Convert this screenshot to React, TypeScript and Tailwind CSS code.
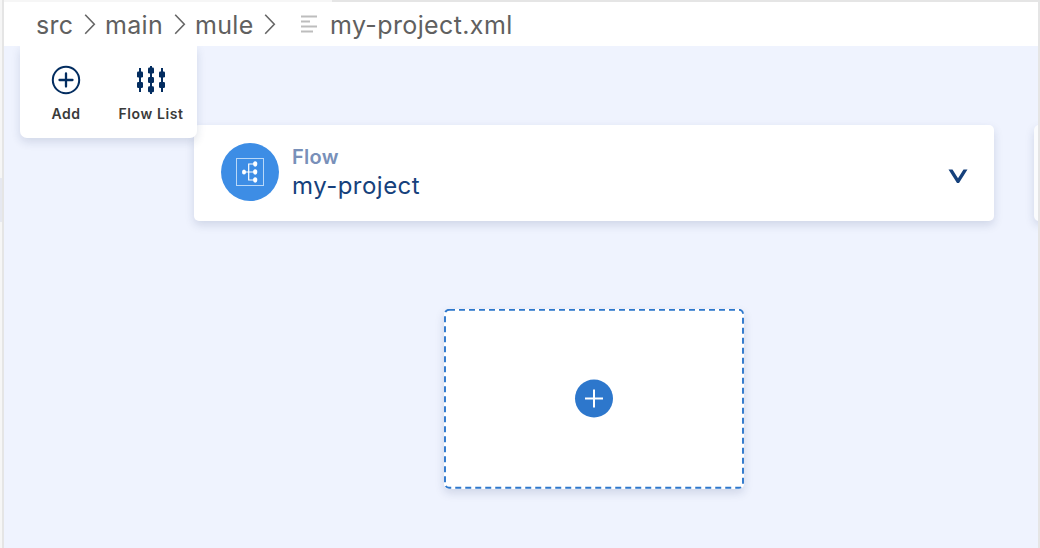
import React from "react";

const Chevron = () => (
  <svg className="h-[22px] w-[12px] shrink-0" viewBox="0 0 12 22" fill="none" stroke="#666" strokeWidth="1.6">
    <path d="M1.2 1.7 L10.3 11.2 L1.2 20.7" />
  </svg>
);

const Crumb = ({ className, children }: { className: string; children: React.ReactNode }) => (
  <span className={`shrink-0 whitespace-nowrap pt-[2px] leading-[44px] ${className}`}>{children}</span>
);

function Breadcrumbs() {
  return (
    <header className="flex h-[44px] shrink-0 items-center bg-white pl-[32px] text-[25px] text-[#606060]">
      <Crumb className="w-[48px] tracking-[0.3px]">src</Crumb>
      <Chevron />
      <Crumb className="ml-[9px] w-[69px] tracking-[0.3px]">main</Crumb>
      <Chevron />
      <Crumb className="ml-[9px] w-[69px] tracking-[0.3px]">mule</Crumb>
      <Chevron />
      <svg className="ml-[25px] h-[20px] w-[17px] shrink-0" viewBox="0 0 17 20" fill="none" stroke="#bdbdbd" strokeWidth="1.8">
        <path d="M0 2.5H16M0 7.5H9M0 12.5H16M0 17.5H12" />
      </svg>
      <Crumb className="ml-[12px] tracking-[0.38px]">my-project.xml</Crumb>
    </header>
  );
}

function Toolbar() {
  return (
    <div className="absolute top-0 left-[16px] z-10 flex h-[92px] w-[177px] rounded-b-[7px] bg-white pt-[19px] text-[14px] font-semibold text-[#3a3a3a] shadow-[0_4px_10px_rgba(30,50,100,0.14)]">
      <button className="flex w-[92px] flex-col items-center">
        <svg className="h-[30px] w-[30px]" viewBox="0 0 30 30" fill="none" stroke="#032d60" strokeWidth="2">
          <circle cx="15" cy="15" r="13.2" />
          <path d="M15 8.5V21.5M8.5 15H21.5" strokeWidth="2.3" strokeLinecap="round" />
        </svg>
        <span className="mt-[9px] leading-[20px] tracking-[0.6px]">Add</span>
      </button>
      <button className="flex w-[78px] flex-col items-center">
        <svg className="h-[30px] w-[30px]" viewBox="0 0 30 30" fill="#032d60">
          <path d="M3 3h2v24H3zM14 1h2v28h-2zM25 3h2v24h-2z" />
          <rect x="1" y="6.5" width="6" height="6" rx="1.3" />
          <rect x="1" y="17" width="6" height="6" rx="1.3" />
          <rect x="12" y="2.5" width="6" height="6" rx="1.3" />
          <rect x="12" y="12" width="6" height="6" rx="1.3" />
          <rect x="12" y="21.3" width="6" height="6" rx="1.3" />
          <rect x="23" y="6.5" width="6" height="6" rx="1.3" />
          <rect x="23" y="17" width="6" height="6" rx="1.3" />
        </svg>
        <span className="mt-[9px] whitespace-nowrap leading-[20px] tracking-[0.6px]">Flow List</span>
      </button>
    </div>
  );
}

function FlowCard() {
  return (
    <section className="flex h-[95.5px] w-[800px] shrink-0 items-center rounded-[5px] bg-white pr-[26px] pb-[1px] pl-[27px] shadow-[0_4px_10px_rgba(30,50,100,0.15)]">
      <svg className="h-[58px] w-[58px] shrink-0" viewBox="0 0 58 58" fill="none">
        <circle cx="29" cy="29" r="29" fill="#3d8de5" />
        <rect x="15.5" y="15.5" width="27" height="27" stroke="#b9d8f8" />
        <path d="M22 29H34M34 21H27.7V37H34" stroke="#fff" strokeWidth="1.2" />
        <g fill="#fff">
          <ellipse cx="23" cy="29" rx="2" ry="2.6" />
          <ellipse cx="34.2" cy="21" rx="2.1" ry="2.7" />
          <ellipse cx="34.2" cy="29" rx="2.1" ry="2.7" />
          <ellipse cx="34.2" cy="37" rx="2.1" ry="2.7" />
        </g>
      </svg>
      <div className="mb-[1px] ml-[13px] flex-1">
        <div className="text-[20px] font-semibold leading-[28px] tracking-[0.3px] text-[#7890b9]">Flow</div>
        <div className="text-[24px] leading-[30px] tracking-[0.48px] text-[#16417c]">my-project</div>
      </div>
      <svg className="mt-[8px] h-[15px] w-[20px]" viewBox="0 0 20 15" fill="#16417c">
        <path d="M0.5 0.5H4.5L10 9.2L15.5 0.5H19.5L11 14H9Z" />
      </svg>
    </section>
  );
}

function DropZone() {
  return (
    <button className="mt-[88.5px] ml-[440px] flex h-[180px] w-[300px] items-center justify-center rounded-[5px] bg-white shadow-[0_4px_10px_rgba(30,50,100,0.15)]">
      <svg className="h-[180px] w-[300px]" viewBox="0 0 300 180" fill="none">
        <rect x="1" y="0.8" width="298" height="178" rx="4" stroke="#2d77cc" strokeWidth="1.9" strokeDasharray="6 4" />
        <circle cx="150" cy="89.5" r="19" fill="#2d77cc" />
        <path d="M150 80.5V98.5M141 89.5H159" stroke="#fff" strokeWidth="2" />
      </svg>
    </button>
  );
}

export default function App() {
  return (
    <div className="flex h-[548px] w-[1040px] overflow-hidden bg-[#f6f6f6] font-['Inter','Liberation_Sans',sans-serif]">
      <div className="w-[2px] shrink-0 pt-[178px]">
        <div className="h-[44px] bg-[#e6e8f0]" />
      </div>
      <main className="flex w-[1038px] flex-col border-r-2 border-l-2 border-[#e5e5e5]">
        <div className="h-[2px] shrink-0 bg-[#f6f6f6] pl-[328px]">
          <div className="h-[2px] bg-[#e5e5e5]" />
        </div>
        <Breadcrumbs />
        <div className="relative min-h-0 flex-1 overflow-hidden bg-[#eff3fe] pt-[79px]">
          <Toolbar />
          <div className="flex gap-[40px] pl-[190px]">
            <FlowCard />
            <div className="h-[95.5px] w-[800px] shrink-0 rounded-[5px] bg-[#fafbfd] shadow-[0_4px_10px_rgba(30,50,100,0.15)]" />
          </div>
          <DropZone />
        </div>
      </main>
    </div>
  );
}
